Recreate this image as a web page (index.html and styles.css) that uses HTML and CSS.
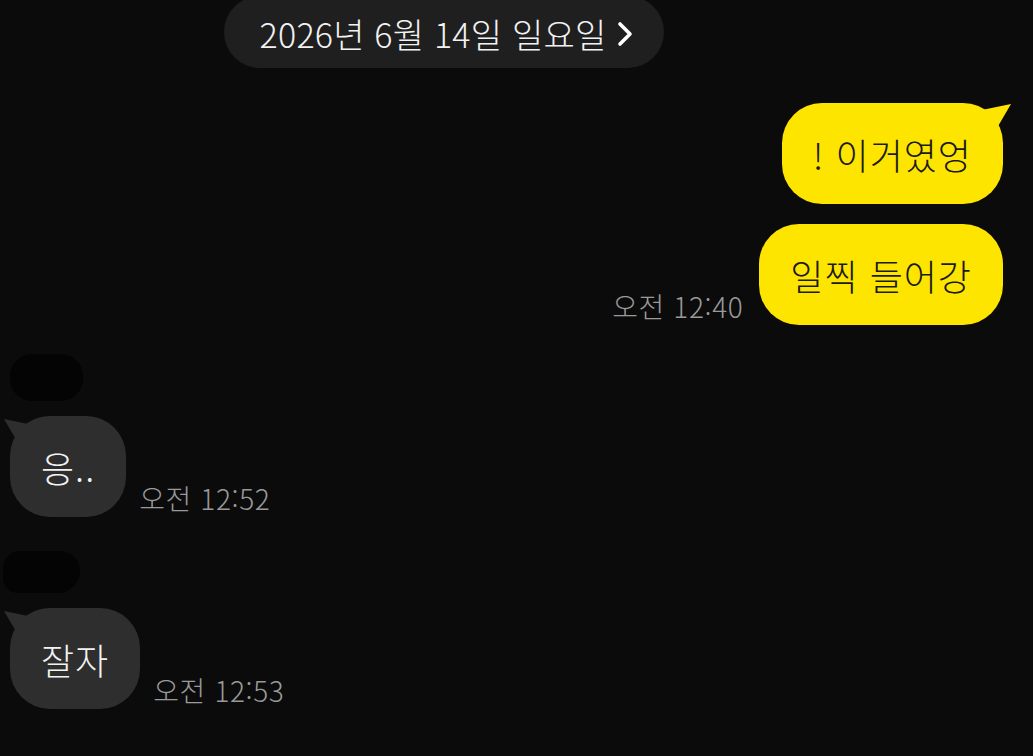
FILE: index.html
```html
<!DOCTYPE html>
<html lang="ko">
<head>
<meta charset="utf-8">
<link rel="stylesheet" href="styles.css">
</head>
<body>
<div class="chat">
  <div class="date-row">
    <div class="date-pill">
      <span>2026년 6월 14일 일요일</span>
      <svg class="chev" width="18" height="28" viewBox="0 0 18 28"><path d="M4 4 L14 14 L4 24" fill="none" stroke="#ffffff" stroke-width="3.6" stroke-linecap="round" stroke-linejoin="round"/></svg>
    </div>
  </div>

  <div class="out-group">
    <div class="out-row first">
      <div class="bubble yellow tail-right">! 이거였엉</div>
    </div>
    <div class="out-row">
      <span class="time">오전 12:40</span>
      <div class="bubble yellow">일찍 들어강</div>
    </div>
  </div>

  <div class="in-group g1">
    <div class="name-blob b1"></div>
    <div class="in-row">
      <div class="bubble gray tail-left">응..</div>
      <span class="time">오전 12:52</span>
    </div>
  </div>

  <div class="in-group g2">
    <div class="name-blob b2"></div>
    <div class="in-row">
      <div class="bubble gray tail-left">잘자</div>
      <span class="time">오전 12:53</span>
    </div>
  </div>
</div>
</body>
</html>
```

FILE: styles.css
```css
* { box-sizing: border-box; }
html, body {
  margin: 0;
  padding: 0;
  background: #0b0b0b;
  width: 1033px;
  height: 756px;
  overflow: hidden;
}
body {
  font-family: "Noto Sans CJK KR", "Noto Sans", sans-serif;
  font-weight: 300;
  color: #ffffff;
}
.chat {
  display: flex;
  flex-direction: column;
}
.date-row {
  display: flex;
  padding-left: 224px;
  margin-top: -4px;
}
.date-pill {
  width: 440px;
  height: 72px;
  border-radius: 36px;
  background: #1f1f1f;
  display: flex;
  align-items: center;
  justify-content: center;
  gap: 10px;
  font-size: 34px;
  letter-spacing: 0.2px;
  padding-top: 2px;
  padding-left: 6px;
  color: #f2f2f2;
}
.chev { margin-top: 2px; }

.out-group {
  display: flex;
  flex-direction: column;
  align-items: flex-end;
  padding-right: 30px;
  gap: 20px;
  margin-top: 35px;
}
.out-row {
  display: flex;
  align-items: flex-end;
  gap: 16px;
}
.bubble {
  position: relative;
  height: 101px;
  border-radius: 40px;
  padding: 0 31px;
  display: flex;
  align-items: center;
  font-size: 36px;
  letter-spacing: 1px;
  line-height: 1;
  white-space: nowrap;
}
.bubble.yellow {
  background: #fee500;
  color: #1a1a1a;
}
.bubble.gray {
  background: #2e2e2e;
  color: #f2f2f2;
}
.tail-right::after {
  content: "";
  position: absolute;
  right: -8px;
  top: 1px;
  width: 34px;
  height: 32px;
  background: #fee500;
  clip-path: polygon(100% 0, 0 22%, 45% 100%);
}
.tail-left::after {
  content: "";
  position: absolute;
  left: -6px;
  top: 3px;
  width: 34px;
  height: 32px;
  background: #2e2e2e;
  clip-path: polygon(0 0, 100% 22%, 55% 100%);
}
.time {
  font-size: 28px;
  color: #9a9a9a;
  line-height: 1;
  padding-bottom: 5px;
  letter-spacing: 0.6px;
}
.out-row .time { margin-left: 4px; }
.in-group {
  display: flex;
  flex-direction: column;
  align-items: flex-start;
  padding-left: 10px;
}
.g1 { margin-top: 29px; }
.g2 { margin-top: 34px; }
.name-blob {
  background: #040404;
  border-radius: 22px;
}
.b1 { width: 73px; height: 47px; margin-bottom: 15px; }
.b2 { width: 77px; height: 42px; margin-left: -7px; margin-bottom: 15px; border-radius: 20px 24px 26px 18px; }
.in-row {
  display: flex;
  align-items: flex-end;
  gap: 13px;
}
.in-row .bubble { padding: 0 31px 0 31px; }
```
